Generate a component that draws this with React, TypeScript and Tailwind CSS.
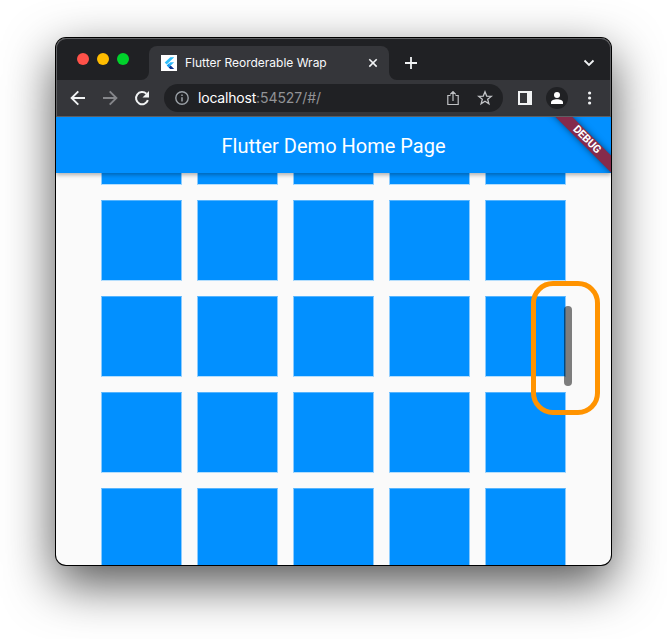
import React from "react";

function FlutterLogo() {
  return (
    <svg width="16" height="16" viewBox="0 0 16 16" className="shrink-0 bg-white">
      <path d="M9.300 2.200h3.900L5.700 9.500 3.700 7.600z" fill="#2fbffa" />
      <path d="M9.300 7.200h3.900L9.700 10.500 7.700 8.700z" fill="#2fb9fa" />
      <path d="M5.700 10.500l2-1.900 2 1.900-2 2z" fill="#0f9df5" />
      <path d="M7.700 12.500l2-2 3.500 3.400H9.200z" fill="#0b3190" />
    </svg>
  );
}

function TabStrip() {
  return (
    <div className="flex h-[42px] bg-[#202124]">
      <div className="flex w-[93px] gap-2 pl-[21px] pt-[15px]">
        <span className="h-3 w-3 rounded-full bg-[#ff5149]" />
        <span className="h-3 w-3 rounded-full bg-[#ffbd00]" />
        <span className="h-3 w-3 rounded-full bg-[#00d22b]" />
      </div>
      <div className="relative mt-2 flex h-[34px] w-[240px] items-center rounded-t-lg bg-[#35363a] pl-3 pr-[10px]">
        <svg className="absolute bottom-0 -left-2" width="8" height="8">
          <path d="M8 0v8H0a8 8 0 0 0 8-8z" fill="#35363a" />
        </svg>
        <svg className="absolute bottom-0 -right-2" width="8" height="8">
          <path d="M0 0v8h8a8 8 0 0 1-8-8z" fill="#35363a" />
        </svg>
        <FlutterLogo />
        <span className="ml-2 w-[143px] whitespace-nowrap font-['Inter',sans-serif] text-[12px] leading-4 text-[#f8f9fa]">
          Flutter Reorderable Wrap
        </span>
        <svg className="ml-auto" width="11" height="10" viewBox="0 0 11 10">
          <path d="M1.300 1.200l7.400 7.400M8.700 1.200L1.300 8.600" stroke="#f1f3f4" strokeWidth="1.6" />
        </svg>
      </div>
      <svg className="ml-4 mt-[19px]" width="12" height="12" viewBox="0 0 12 12">
        <path d="M6 0v12M0 6h12" stroke="#f1f3f4" strokeWidth="1.8" />
      </svg>
      <svg className="ml-auto mr-4 mt-5" width="12" height="10" viewBox="0 0 12 10">
        <path d="M1.500 2.500L6 7l4.500-4.500" stroke="#f1f3f4" strokeWidth="1.8" fill="none" />
      </svg>
    </div>
  );
}

function Toolbar() {
  return (
    <div className="flex h-9 items-center bg-[#35363a] text-[#f1f3f4]">
      <svg className="ml-[14px]" width="16" height="16" viewBox="0 0 16 16" fill="none" stroke="currentColor" strokeWidth="1.9">
        <path d="M15 8H2M8.3 1.3L1.6 8l6.700 6.700" />
      </svg>
      <svg className="ml-4" width="16" height="16" viewBox="0 0 16 16" fill="none" stroke="#85868a" strokeWidth="1.9">
        <path d="M1 8h13M7.700 1.300L14.400 8l-6.700 6.700" />
      </svg>
      <svg className="ml-4" width="16" height="16" viewBox="0 0 16 16">
        <path d="M13.900 10.200A6.100 6.100 0 1 1 12.400 3.800" fill="none" stroke="currentColor" strokeWidth="2" />
        <path d="M15 1v6.500H8.500z" fill="currentColor" />
      </svg>
      <div className="ml-[14px] flex h-7 w-[339px] items-center rounded-full bg-[#202124] pl-[11px] pr-[10px]">
        <svg width="14" height="14" viewBox="0 0 14 14" fill="none" stroke="#9aa0a6">
          <circle cx="7" cy="7" r="6.200" strokeWidth="1.400" />
          <path d="M7 6.200v4.300M7 3.500v1.500" strokeWidth="1.500" />
        </svg>
        <span className="ml-[9px] whitespace-nowrap font-['Inter',sans-serif] text-[14px] leading-5 tracking-[-0.06px] text-[#929396]">
          <span className="tracking-[-0.2px] text-white">localhost</span>:54527/#/
        </span>
        <svg className="ml-auto" width="14" height="16" viewBox="0 0 14 16" fill="none" stroke="#bfc1c4" strokeWidth="1.2">
          <path d="M4.500 5.500H1.800v9h10.400v-9H9.500M7 11V1.700M4.200 4.300L7 1.500l2.800 2.800" />
        </svg>
        <svg className="ml-[17px]" width="16" height="16" viewBox="0 0 16 16" fill="none" stroke="#c3c5c8" strokeWidth="1.3">
          <path d="M8 1.800l1.700 4.300 4.600.3-3.600 2.900 1.200 4.500L8 11.300l-3.900 2.500 1.200-4.500L1.700 6.400l4.600-.3z" />
        </svg>
      </div>
      <svg className="ml-[15px]" width="14" height="14" viewBox="0 0 14 14">
        <path d="M0 0h14v14H0zM2 2v10h7V2z" fill="#f1f3f4" fillRule="evenodd" />
      </svg>
      <div className="ml-[14px] flex h-[22px] w-[22px] items-center justify-center rounded-full bg-[#202124]">
        <svg width="12" height="12" viewBox="0 0 12 12" fill="#fff">
          <circle cx="6" cy="3" r="3" />
          <path d="M0 12v-1.500C0 8.500 3 7.300 6 7.300s6 1.200 6 3.200V12z" />
        </svg>
      </div>
      <svg className="ml-5" width="4" height="14" viewBox="0 0 4 14" fill="currentColor">
        <circle cx="1.600" cy="2" r="1.600" />
        <circle cx="1.600" cy="7" r="1.600" />
        <circle cx="1.600" cy="12" r="1.600" />
      </svg>
    </div>
  );
}

function AppBar() {
  return (
    <div className="relative z-10 h-14 shrink-0 bg-[#0290ff] shadow-[0_2px_4px_rgba(0,0,0,0.3)]">
      <h1 className="pt-[15px] text-center text-[20px] font-normal leading-[28px] text-white">
        Flutter Demo Home Page
      </h1>
      <div className="absolute right-0 top-0 h-14 w-20 overflow-hidden">
        <div className="absolute -right-[28px] top-[17px] flex h-3 w-[104px] rotate-45 items-center justify-center bg-[#852b4b] shadow-[0_0_6px_rgba(0,0,0,0.5)]">
          <span className="pr-[1px] text-[11px] font-bold leading-3 tracking-[-0.2px] text-white">DEBUG</span>
        </div>
      </div>
    </div>
  );
}

function TileGrid() {
  return (
    <div className="-mt-[69px] grid grid-cols-[repeat(5,81px)] justify-center gap-[15px] pr-px">
      {Array.from({ length: 25 }, (_, i) => (
        <div
          key={i}
          className="h-[81px] border border-b-[#b4defd] border-l-[#8bcbfe] border-r-[#8bcbfe] border-t-[#55b4fe] bg-[#0290ff]"
        />
      ))}
    </div>
  );
}

export default function App() {
  return (
    <div className="relative h-[639px] w-[667px] overflow-hidden bg-white pl-[55px] pt-[37px] font-['Roboto',sans-serif]">
      <div className="h-[529px] w-[557px] rounded-[11px] bg-black p-px shadow-[0_18px_50px_rgba(0,0,0,0.68)]">
        <div className="relative flex h-[527px] flex-col overflow-hidden rounded-[10px] bg-[#fafafa]">
          <TabStrip />
          <Toolbar />
          <div className="h-px shrink-0 bg-[#626367]" />
          <AppBar />
          <div className="min-h-0 flex-1 overflow-hidden">
            <TileGrid />
          </div>
          <div className="pointer-events-none absolute inset-x-0 top-0 h-[78px] rounded-t-[10px] border-x border-t border-[#606164]" />
        </div>
      </div>
      <div className="absolute left-[563.5px] top-[306px] h-20 w-2 rounded-full bg-black/50" />
      <div className="absolute left-[531px] top-[281px] h-[134px] w-[69px] rounded-[22px] border-[5px] border-[#ff9300]" />
    </div>
  );
}
